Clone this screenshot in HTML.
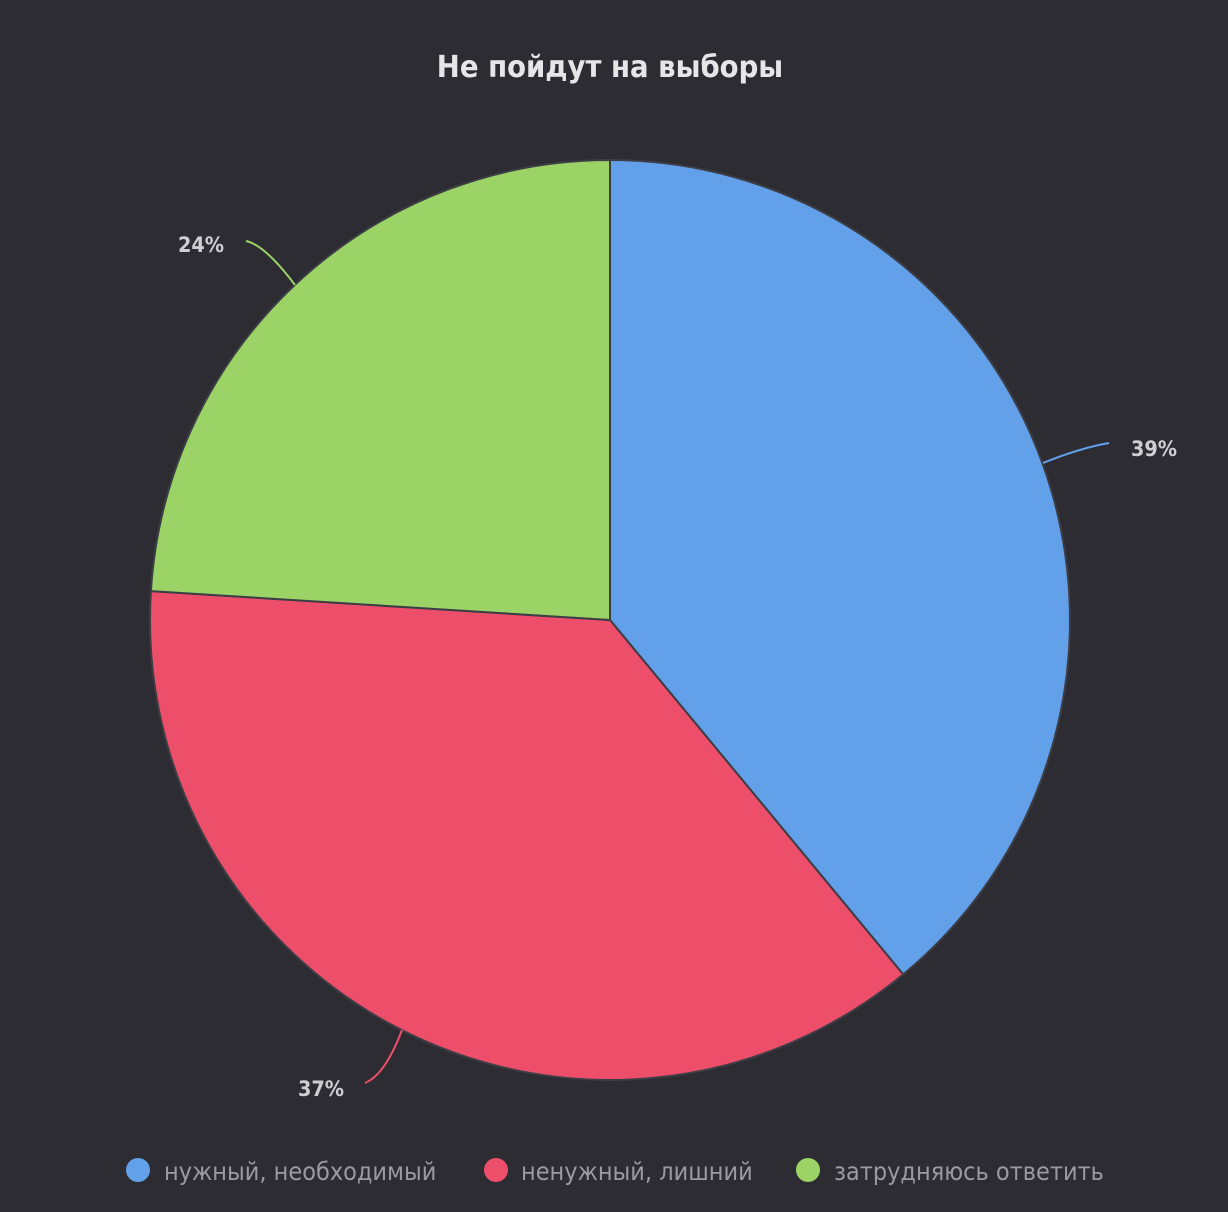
<!DOCTYPE html>
<html><head><meta charset="utf-8"><style>
html,body{margin:0;padding:0;background:#2d2c33;}
svg{display:block;font-family:"DejaVu Sans Condensed","DejaVu Sans","Liberation Sans",sans-serif;}
</style></head><body>
<svg width="1228" height="1212" viewBox="0 0 1228 1212" xmlns="http://www.w3.org/2000/svg">
<rect width="1228" height="1212" fill="#2d2c33"/>
<text x="610" y="77" text-anchor="middle" font-size="30.6" font-weight="bold" fill="#e6e6e8">Не пойдут на выборы</text>
<g stroke="#3d3d46" stroke-width="2" stroke-linejoin="round">
<path d="M610 620 L610 160 A460 460 0 0 1 903.2 974.4 Z" fill="#62a0ea"/>
<path d="M610 620 L903.2 974.4 A460 460 0 0 1 150.9 591.1 Z" fill="#ed4e6a"/>
<path d="M610 620 L150.9 591.1 A460 460 0 0 1 610 160 Z" fill="#9bd366"/>
</g>
<path d="M1043 463 Q1080 448 1109 443" stroke="#62a0ea" stroke-width="2" fill="none"/>
<path d="M295 285 Q265 245 246 241" stroke="#9bd366" stroke-width="2" fill="none"/>
<path d="M402 1030 Q385 1075 365 1083" stroke="#ed4e6a" stroke-width="2" fill="none"/>
<g font-size="21.4" font-weight="bold" fill="#cfcfd3">
<text x="1131" y="456">39%</text>
<text x="178" y="252">24%</text>
<text x="298" y="1096">37%</text>
</g>
<g font-size="25" fill="#9a9aa0">
<circle cx="138" cy="1170" r="12" fill="#62a0ea"/>
<text x="164" y="1180">нужный, необходимый</text>
<circle cx="496" cy="1170" r="12" fill="#ed4e6a"/>
<text x="521" y="1180">ненужный, лишний</text>
<circle cx="808" cy="1170" r="12" fill="#9bd366"/>
<text x="834" y="1180">затрудняюсь ответить</text>
</g>
</svg>
</body></html>
